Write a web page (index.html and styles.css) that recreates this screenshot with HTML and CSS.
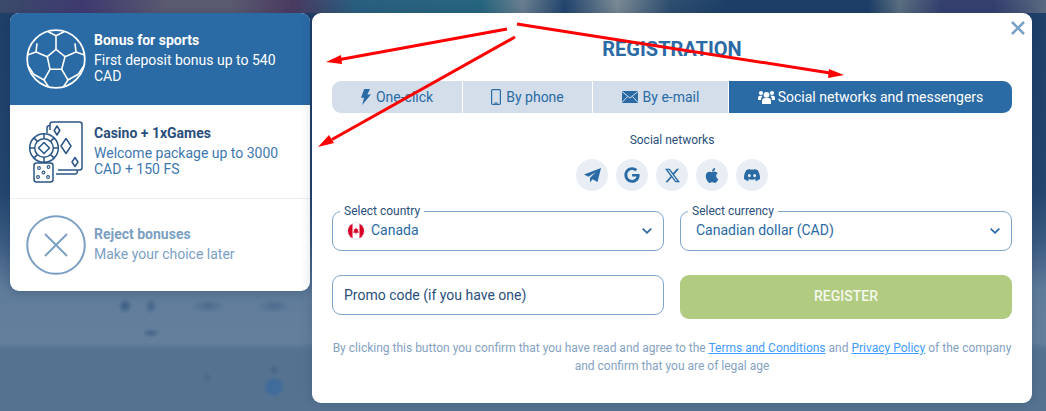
FILE: index.html
```html
<!DOCTYPE html>
<html lang="en">
<head>
<meta charset="utf-8">
<title>Registration</title>
<link rel="stylesheet" href="styles.css">
</head>
<body>
<div class="stage">
  <aside class="bonuses">
    <div class="bonus bonus-active">
      <svg class="bonus-icon" viewBox="0 0 60 60" fill="none" stroke="#fff" stroke-width="1.6" stroke-linejoin="round">
        <circle cx="30" cy="30" r="28.8" stroke-width="1.8"/>
        <path d="M30 20.3 39 27.7 35.700 40.300H24L21.300 27.700Z"/>
        <path d="M22.300 2.700 30 6.700 38 2.700M30 6.700V20.300M39 27.700 50 23 49 14.300M50 23 58.600 26M21.300 27.700 10 23 11 14.300M10 23 1.400 26M35.700 40.300 42 51 52.300 45.300M42 51 37.500 57.800M24 40.300 18 51 7.700 45.300M18 51 22.500 57.800M52.300 45.300 58.500 36M7.700 45.300 1.500 36"/>
      </svg>
      <div class="bonus-text">
        <div class="bonus-title">Bonus for sports</div>
        <div class="bonus-desc">First deposit bonus up to 540 CAD</div>
      </div>
    </div>
    <div class="bonus bonus-casino">
      <svg class="bonus-icon" viewBox="0 0 60 64" fill="none" stroke="#2a5585" stroke-width="1.5" stroke-linejoin="round">
        <path d="M24 10V4.500Q24 2 26.500 2H53.500Q56 2 56 4.500V47.500Q56 50 53.500 50H32"/>
        <path d="M21 13V8Q21 5.500 24 5.500M30 54H49Q51.500 54 51.500 50.500"/>
        <path d="M31 6 33.800 10.500 31 15 28.200 10.500ZM40 18.500 45 26 40 33.500 35 26ZM49 37.500 52 42 49 46.500 46 42Z"/>
        <circle cx="18" cy="28" r="14.300" fill="#fff"/>
        <circle cx="18" cy="28" r="9.300"/>
        <path d="M18 22.500 23.500 28 18 33.500 12.500 28Z"/>
        <path d="M18 13.700V18.700M18 37.300V42.300M3.700 28H8.700M27.300 28H32.300M7.900 17.900 11.400 21.400M24.600 34.600 28.100 38.100M28.100 17.900 24.600 21.400M11.400 34.600 7.900 38.100"/>
        <rect x="8" y="43" width="19" height="19" rx="2.500" fill="#fff"/>
        <g fill="none" stroke="#2a5585" stroke-width="1.100"><circle cx="13" cy="48" r="1.400"/><circle cx="22.500" cy="47" r="1.400"/><circle cx="17.500" cy="52.500" r="1.400"/><circle cx="12" cy="57" r="1.400"/><circle cx="22" cy="57" r="1.400"/></g>
      </svg>
      <div class="bonus-text">
        <div class="bonus-title">Casino + 1xGames</div>
        <div class="bonus-desc">Welcome package up to 3000 CAD + 150 FS</div>
      </div>
    </div>
    <div class="bonus bonus-reject">
      <svg class="bonus-icon" viewBox="0 0 60 60" fill="none" stroke="#7ba0c3" stroke-width="2">
        <circle cx="30" cy="30" r="28.800"/>
        <path d="M19 19 41 41M41 19 19 41"/>
      </svg>
      <div class="bonus-text">
        <div class="bonus-title">Reject bonuses</div>
        <div class="bonus-desc">Make your choice later</div>
      </div>
    </div>
  </aside>

  <main class="panel">
    <button class="close" aria-label="Close">
      <svg viewBox="0 0 14 14" width="14" height="14" stroke="#7aa2c6" stroke-width="2.600" fill="none"><path d="M1 1 13 13M13 1 1 13"/></svg>
    </button>
    <h1 class="title">REGISTRATION</h1>
    <nav class="tabs">
      <div class="tab">
        <svg class="tab-icon" width="10" height="16" viewBox="0 0 10 16" fill="#2a6aa5"><path d="M3.200 0H9L6.400 5.500H10L1.200 16 3 8.800H0Z"/></svg>
        One-click
      </div>
      <div class="tab">
        <svg class="tab-icon" width="10" height="16" viewBox="0 0 10 16" fill="none" stroke="#2a6aa5" stroke-width="1.200"><rect x=".6" y=".6" width="8.800" height="14.800" rx="1.200"/><path d="M3.500 14.200h3" /></svg>
        By phone
      </div>
      <div class="tab">
        <svg class="tab-icon" width="16" height="12" viewBox="0 0 16 12"><rect width="16" height="12" fill="#2a6aa5"/><path d="M0 .5 8 7 16 .5M0 11.500 5.500 5.500M16 11.500 10.500 5.500" fill="none" stroke="#d3deea" stroke-width="1"/></svg>
        By e-mail
      </div>
      <div class="tab tab-active">
        <svg class="tab-icon" width="17" height="14" viewBox="0 0 17 14" fill="#fff"><circle cx="8.500" cy="4.800" r="2.900"/><circle cx="3" cy="3" r="2.100"/><circle cx="14" cy="3" r="2.100"/><path d="M4 14V11Q4 8 6.800 8H10.200Q13 8 13 11V14ZM0 10V8Q0 5.800 2 5.800H4.600Q3 7 3 10ZM17 10V8Q17 5.800 15 5.800H12.400Q14 7 14 10Z"/></svg>
        Social networks and messengers
      </div>
    </nav>

    <div class="social-label">Social networks</div>
    <div class="socials">
      <a class="social"><svg width="17" height="15" viewBox="0 0 17 15" fill="#2a6aa5"><path d="M17 0 0 6.500 4.500 8.700 12 4 6 9.800 6 14.500 8.500 11.200 13.500 14Z"/></svg></a>
      <a class="social"><svg width="16" height="16" viewBox="0 0 488 512" fill="#2a6aa5"><path d="M488 261.800C488 403.300 391.100 504 248 504 110.800 504 0 393.200 0 256S110.800 8 248 8c66.800 0 123 24.500 166.300 64.900l-67.500 64.900C258.500 52.600 94.300 116.600 94.300 256c0 86.500 69.100 156.600 153.700 156.600 98.200 0 135-70.400 140.800-106.900H248v-85.300h236.100c2.300 12.700 3.900 24.900 3.900 41.400z"/></svg></a>
      <a class="social"><svg width="15" height="15" viewBox="0 0 16 16" fill="#2a6aa5"><path d="M12.600.75h2.454l-5.360 6.142L16 15.250h-4.937l-3.867-5.070-4.425 5.070H.316l5.733-6.570L0 .75h5.063l3.495 4.633L12.601.75Zm-.86 13.028h1.360L4.323 2.145H2.865z"/></svg></a>
      <a class="social"><svg width="14" height="17" viewBox="0 0 384 512" fill="#2a6aa5"><path d="M318.700 268.700c-.2-36.700 16.400-64.400 50-84.800-18.800-26.900-47.200-41.700-84.700-44.600-35.500-2.800-74.300 20.700-88.500 20.700-15 0-49.400-19.700-76.400-19.700C63.300 141.200 4 184.800 4 273.500q0 39.300 14.400 81.200c12.800 36.700 59 126.700 107.200 125.200 25.200-.6 43-17.900 75.800-17.900 31.800 0 48.300 17.900 76.400 17.900 48.600-.7 90.400-82.500 102.600-119.300-65.200-30.700-61.700-90-61.700-91.900zm-56.600-164.200c27.300-32.400 24.800-61.900 24-72.500-24.100 1.400-52 16.400-67.900 34.900-17.500 19.800-27.800 44.300-25.600 71.900 26.100 2 49.900-11.400 69.500-34.300z"/></svg></a>
      <a class="social"><svg width="16" height="16" viewBox="0 0 16 16" fill="#2a6aa5"><path d="M13.545 2.907a13.200 13.200 0 0 0-3.257-1.011.05.05 0 0 0-.052.025c-.141.25-.297.577-.406.833a12.200 12.200 0 0 0-3.658 0 8 8 0 0 0-.412-.833.05.05 0 0 0-.052-.025c-1.125.194-2.220.534-3.257 1.011a.04.04 0 0 0-.021.018C.356 6.024-.213 9.047.066 12.032q.003.022.021.037a13.300 13.300 0 0 0 3.995 2.020.05.05 0 0 0 .056-.019q.463-.63.818-1.329a.05.05 0 0 0-.01-.059l-.018-.011a9 9 0 0 1-1.248-.595.05.05 0 0 1-.02-.066l.015-.019q.127-.095.248-.195a.05.05 0 0 1 .051-.007c2.619 1.196 5.454 1.196 8.041 0a.05.05 0 0 1 .053.007q.121.1.248.195a.05.05 0 0 1-.004.085 8 8 0 0 1-1.249.594.05.05 0 0 0-.03.03.05.05 0 0 0 .003.041c.24.465.515.909.817 1.329a.05.05 0 0 0 .056.019 13.200 13.200 0 0 0 4.001-2.020.05.05 0 0 0 .021-.037c.334-3.451-.559-6.449-2.366-9.106a.03.03 0 0 0-.02-.019m-8.198 7.307c-.789 0-1.438-.724-1.438-1.612s.637-1.613 1.438-1.613c.807 0 1.450.73 1.438 1.613 0 .888-.637 1.612-1.438 1.612m5.316 0c-.788 0-1.438-.724-1.438-1.612s.637-1.613 1.438-1.613c.807 0 1.451.73 1.438 1.613 0 .888-.631 1.612-1.438 1.612"/></svg></a>
    </div>

    <form class="form">
      <div class="field">
        <span class="field-label">Select country</span>
        <svg class="flag" width="18" height="18" viewBox="0 0 18 18"><defs><clipPath id="flagclip"><circle cx="9" cy="9" r="8"/></clipPath></defs><circle cx="9" cy="9" r="9" fill="#e6e9ee"/><g clip-path="url(#flagclip)"><rect width="18" height="18" fill="#fff"/><rect x="1" width="4.500" height="18" fill="#d80027"/><rect x="12.500" width="4.500" height="18" fill="#d80027"/><path d="M9 5.500 10 7.500 11.300 7 10.700 9.500 12 9.500 11.500 10.800H9.300V12.500H8.700V10.800H6.500L6 9.500 7.300 9.500 6.700 7 8 7.500Z" fill="#d80027"/></g></svg>
        <span class="field-value">Canada</span>
        <svg class="chevron" width="10" height="6" viewBox="0 0 10 6" fill="none" stroke="#2a6aa5" stroke-width="1.800"><path d="M.7.7 5 4.800 9.300.7"/></svg>
      </div>
      <div class="field field-currency">
        <span class="field-label">Select currency</span>
        <span class="field-value">Canadian dollar (CAD)</span>
        <svg class="chevron" width="10" height="6" viewBox="0 0 10 6" fill="none" stroke="#2a6aa5" stroke-width="1.800"><path d="M.7.7 5 4.800 9.300.7"/></svg>
      </div>
      <div class="field field-promo">Promo code (if you have one)</div>
      <button class="register" type="button">REGISTER</button>
    </form>

    <p class="terms">By clicking this button you confirm that you have read and agree to the <a href="#">Terms and Conditions</a> and <a href="#">Privacy Policy</a> of the company and confirm that you are of legal age</p>
  </main>

  <svg class="arrows" width="1046" height="411" viewBox="0 0 1046 411" fill="#f00" stroke="none">
    <path d="M507 29 340 59.500" stroke="#f00" stroke-width="3" fill="none"/>
    <path d="M326 62 341 55 342 64Z"/>
    <path d="M515 37 332 139.500" stroke="#f00" stroke-width="3" fill="none"/>
    <path d="M318 147 329 135 334 143Z"/>
    <path d="M517 24 830 73" stroke="#f00" stroke-width="3" fill="none"/>
    <path d="M844 75 829 69 828 78Z"/>
  </svg>
</div>
</body>
</html>
```

FILE: styles.css
```css
* { box-sizing: border-box; }
html, body { margin: 0; height: 100%; }
body {
  width: 1046px;
  height: 411px;
  overflow: hidden;
  font-family: Roboto, "Liberation Sans", sans-serif;
  background:
    radial-gradient(circle 11px at 274px 387px, #3f6c9a 0, #3f6c9a 55%, rgba(63,108,154,0) 100%),
    radial-gradient(ellipse 5px 6px at 274px 370px, rgba(60,90,125,.6) 0, rgba(60,90,125,0) 100%),
    radial-gradient(ellipse 5px 7px at 207px 378px, rgba(60,90,125,.4) 0, rgba(60,90,125,0) 100%),
    radial-gradient(ellipse 9px 5px at 151px 333px, rgba(60,95,135,.8) 0, rgba(60,95,135,0) 100%),
    radial-gradient(ellipse 7px 8px at 125px 306px, rgba(55,90,130,.9) 0, rgba(55,90,130,0) 100%),
    radial-gradient(ellipse 6px 8px at 151px 306px, rgba(55,90,130,.7) 0, rgba(55,90,130,0) 100%),
    radial-gradient(ellipse 16px 7px at 208px 306px, rgba(55,90,130,.5) 0, rgba(55,90,130,0) 100%),
    radial-gradient(ellipse 16px 7px at 274px 306px, rgba(55,90,130,.5) 0, rgba(55,90,130,0) 100%),
    linear-gradient(90deg, #3a4a6a 0, #3f3a70 8%, #5a5a70 16%, #5a5a70 22%, #4a3a60 28%, #2a5f80 34%, #27667f 46%, #6a7f90 50%, #23456e 54%, #7a8a95 59%, #2f4f70 64%, #1d3e68 70%, #1d3e68 83%, #5a6f80 86%, #35406f 90%, #35406f 95%, #5a6a80 100%) 0 0 / 100% 13px no-repeat,
    linear-gradient(180deg, #1e3f68 0, #23456f 190px, #3a5a80 240px, #5f7c9b 290px, #637f9b 342px, #557391 350px, #557391 411px);
}
.stage {
  position: relative;
  width: 1046px;
  height: 411px;
  padding: 13px 14px 8px 10px;
  display: flex;
  align-items: flex-start;
  gap: 2px;
}

/* bonus column */
.bonuses {
  width: 300px;
  height: 278px;
  flex: none;
  background: #fff;
  border-radius: 9px;
  overflow: hidden;
  box-shadow: 0 2px 8px rgba(20, 40, 70, .25);
}
.bonus {
  display: flex;
  align-items: center;
  gap: 8px;
  padding: 0 16px;
}
.bonus-icon { width: 60px; flex: none; }
.bonus-text { font-size: 14px; line-height: 16px; padding-bottom: 2px; }
.bonus-title { font-weight: 700; margin-bottom: 4px; font-size: 14px; }
.bonus-active { height: 92px; background: #2a6aa5; color: #fff; }
.bonus-active .bonus-icon { height: 60px; }
.bonus-casino { height: 94px; border-bottom: 1px solid #e8eef4; color: #3e77af; }
.bonus-casino .bonus-icon { height: 64px; }
.bonus-casino .bonus-title { color: #2a4f7c; }
.bonus-reject { height: 92px; color: #7ba0c3; }
.bonus-reject .bonus-icon { height: 60px; }

/* main panel */
.panel {
  position: relative;
  width: 720px;
  height: 390px;
  flex: none;
  padding: 25px 20px 0;
  background: #fff;
  border-radius: 9px;
  box-shadow: 0 0 12px rgba(20, 40, 70, .2);
}
.close {
  position: absolute;
  top: 8px;
  right: 7px;
  padding: 0;
  width: 14px;
  height: 14px;
  border: 0;
  background: none;
}
.title {
  margin: 0 0 20px;
  height: 23px;
  font-size: 20px;
  line-height: 23px;
  font-weight: 700;
  text-align: center;
  color: #2a6aa5;
}
.tabs {
  display: grid;
  grid-template-columns: 130px 129px 135px 283px;
  gap: 1px;
  height: 32px;
  border-radius: 9px;
  overflow: hidden;
}
.tab {
  display: flex;
  align-items: center;
  justify-content: center;
  gap: 5px;
  font-size: 14px;
  color: #2a6aa5;
  background: #d3deea;
}
.tab-icon { flex: none; }
.tab-active { background: #2a6aa5; color: #fff; gap: 3px; }
.social-label {
  margin-top: 19px;
  height: 16px;
  font-size: 12px;
  line-height: 16px;
  text-align: center;
  color: #2a4f7c;
}
.socials {
  display: flex;
  justify-content: center;
  gap: 8px;
  margin-top: 11px;
}
.social {
  width: 32px;
  height: 32px;
  display: flex;
  align-items: center;
  justify-content: center;
  border-radius: 50%;
  background: #e8eef4;
}

/* form */
.form {
  display: grid;
  grid-template-columns: 332px 332px;
  column-gap: 16px;
  row-gap: 24px;
  align-items: start;
  margin-top: 20px;
}
.field {
  position: relative;
  height: 40px;
  display: flex;
  align-items: center;
  padding: 0 11px 0 15px;
  font-size: 14px;
  color: #2a6aa5;
  border: 1px solid #7ea6cc;
  border-radius: 9px;
}
.field-label {
  position: absolute;
  top: -8px;
  left: 7px;
  padding: 0 4px;
  font-size: 12px;
  line-height: 14px;
  color: #2a4f7c;
  background: #fff;
}
.flag { flex: none; margin: 0 6px 0 -1px; }
.field-value { flex: 1; position: relative; top: -1px; }
.chevron { flex: none; }
.field-promo { padding-left: 11px; color: #2a4f7c; }
.register {
  height: 44px;
  padding: 0 0 2px;
  border: 0;
  border-radius: 9px;
  font: 500 14px Roboto, sans-serif;
  color: #f5f8ee;
  background: #b1cb80;
}
.terms {
  margin: 20px 0 0;
  font-size: 12px;
  line-height: 18px;
  text-align: center;
  color: #85a2c2;
}
.terms a { color: #3f9bff; }
.arrows {
  position: absolute;
  inset: 0;
  pointer-events: none;
}
```
